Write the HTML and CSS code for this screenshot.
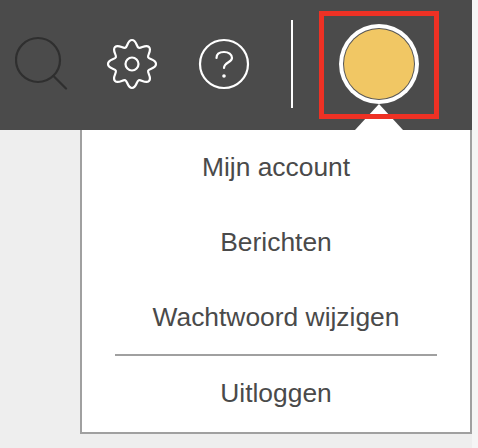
FILE: index.html
```html
<!DOCTYPE html>
<html lang="nl">
<head>
    <meta charset="UTF-8">
    <title>Mijn account</title>
    <link rel="stylesheet" href="styles.css">
</head>
<body>
    <div class="page">
        <header class="topbar">
            <svg class="icon-search" viewBox="0 0 54 54" aria-hidden="true">
                <circle cx="23" cy="24" r="22" />
                <path d="M38.500 40 L51 52.500" />
            </svg>
            <svg class="icon-gear" viewBox="0 0 54 54" aria-hidden="true">
                <g transform="translate(27 27)">
                    <path d="M0 -24 C4.500 -24 4.390 -17.130 6.700 -16.170 C9.010 -15.210 13.790 -20.150 16.970 -16.970 C20.150 -13.790 15.210 -9.010 16.170 -6.700 C17.130 -4.390 24 -4.500 24 0 C24 4.500 17.130 4.390 16.170 6.700 C15.210 9.010 20.150 13.790 16.970 16.970 C13.790 20.150 9.010 15.210 6.700 16.170 C4.390 17.130 4.500 24 0 24 C-4.500 24 -4.390 17.130 -6.700 16.170 C-9.010 15.210 -13.790 20.150 -16.970 16.970 C-20.150 13.790 -15.210 9.010 -16.170 6.700 C-17.130 4.390 -24 4.500 -24 0 C-24 -4.500 -17.130 -4.390 -16.170 -6.700 C-15.210 -9.010 -20.150 -13.790 -16.970 -16.970 C-13.790 -20.150 -9.010 -15.210 -6.700 -16.170 C-4.390 -17.130 -4.500 -24 0 -24 Z" />
                    <circle r="6.500" />
                </g>
            </svg>
            <svg class="icon-help" viewBox="0 0 54 54" aria-hidden="true">
                <circle cx="27" cy="27" r="24" />
                <path d="M19.500 21 C19.500 17 22.500 15 27 15 C31.500 15 35 17.500 35 21 C35 25.500 27 25 27 31" />
                <circle class="dot" cx="27" cy="39" r="1.800" />
            </svg>
            <div class="divider"></div>
            <div class="avatar-box">
                <div class="avatar"></div>
            </div>
        </header>

        <nav class="menu">
            <div class="menu-arrow"></div>
            <a class="menu-item" href="#">Mijn account</a>
            <a class="menu-item" href="#">Berichten</a>
            <a class="menu-item" href="#">Wachtwoord wijzigen</a>
            <hr class="menu-line">
            <a class="menu-item" href="#">Uitloggen</a>
        </nav>
    </div>
</body>
</html>
```

FILE: styles.css
```css
html, body {
    margin: 0;
    padding: 0;
}

body {
    background: #f5f5f5;
    font-family: "Liberation Sans", Arial, sans-serif;
}

.page {
    width: 472px;
    height: 448px;
    background: #eeeeee;
}

/* Top bar */
.topbar {
    height: 130px;
    box-sizing: border-box;
    padding: 0 0 2px 13px;
    background: #4b4b4b;
    display: flex;
    align-items: center;
}

.topbar svg {
    width: 54px;
    height: 54px;
    flex: none;
    fill: none;
    stroke-width: 2.2;
    stroke-linecap: round;
    stroke-linejoin: round;
}

.icon-search {
    stroke: #2f2f2f;
    margin-left: 2px;
    margin-top: -2px;
}

.icon-gear {
    stroke: #fff;
    margin-left: 36px;
}

.icon-help {
    stroke: #fff;
    margin-left: 38px;
}

.icon-help .dot {
    fill: #fff;
    stroke: none;
}

.divider {
    width: 2px;
    height: 88px;
    margin-left: 40px;
    background: #fff;
}

.avatar-box {
    width: 120px;
    height: 108px;
    box-sizing: border-box;
    margin-left: 26px;
    margin-top: 2px;
    border: 5px solid #ee3124;
    display: flex;
    justify-content: center;
    align-items: center;
    position: relative;
    z-index: 2;
}

.avatar {
    width: 70px;
    height: 70px;
    margin-top: -2px;
    border-radius: 50%;
    background: #f1c764;
    box-shadow: 0 0 0 1px #555, 0 0 0 5px #fff;
}

/* Dropdown */
.menu {
    width: 392px;
    height: 304px;
    box-sizing: border-box;
    margin-left: 80px;
    background: #fff;
    border: solid #a0a0a0;
    border-width: 0 2px 2px 2px;
    position: relative;
    display: flex;
    flex-direction: column;
}

.menu-arrow {
    position: absolute;
    right: 67px;
    top: -26px;
    width: 0;
    height: 0;
    border-left: 24px solid transparent;
    border-right: 24px solid transparent;
    border-bottom: 26px solid #fff;
    z-index: 1;
}

.menu-item {
    height: 75px;
    line-height: 75px;
    flex: none;
    text-align: center;
    font-size: 26.4px;
    color: #4a4a4a;
    text-decoration: none;
}

.menu-line {
    height: 2px;
    margin: -1px 33px 0;
    border: none;
    background: #a0a0a0;
    flex: none;
}
```
